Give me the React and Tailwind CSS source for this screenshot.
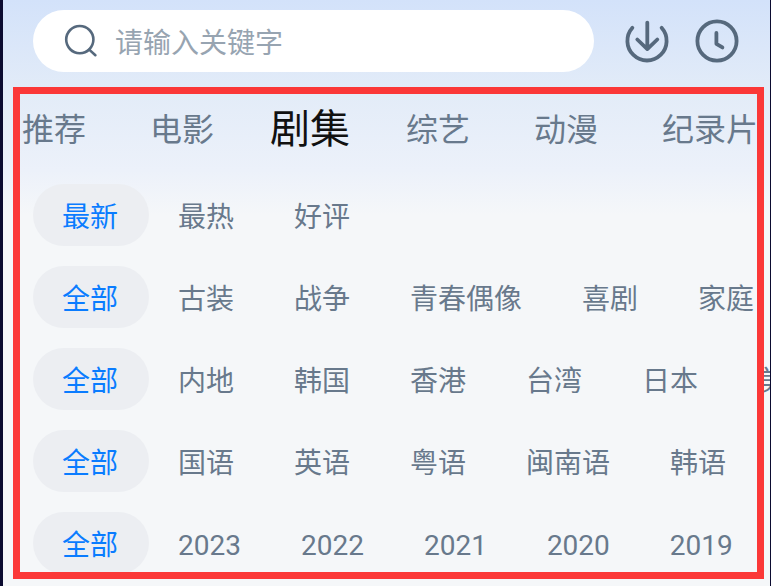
import React, { useState } from 'react';

const TABS = ['推荐', '电影', '剧集', '综艺', '动漫', '纪录片'];

const FILTERS = [
  { name: 'sort', options: ['最新', '最热', '好评'] },
  { name: 'genre', options: ['全部', '古装', '战争', '青春偶像', '喜剧', '家庭'] },
  { name: 'region', options: ['全部', '内地', '韩国', '香港', '台湾', '日本', '美国'] },
  { name: 'language', options: ['全部', '国语', '英语', '粤语', '闽南语', '韩语'] },
  { name: 'year', options: ['全部', '2023', '2022', '2021', '2020', '2019'] },
];

const SearchIcon = () => (
  <svg className="w-9 h-9 shrink-0" viewBox="0 0 36 36" fill="none" stroke="#56697d" strokeWidth="2.6">
    <circle cx="16.8" cy="16.6" r="13.6" />
    <path d="M26.2 26.6l6.2 5.6" strokeLinecap="round" />
  </svg>
);

const DownloadIcon = () => (
  <svg className="w-11 h-11" viewBox="0 0 44 44" fill="none" stroke="#56697d" strokeWidth="3.8" strokeLinecap="round" strokeLinejoin="round">
    <path d="M7.4 8.8A19.6 19.6 0 1 0 36.6 8.8" />
    <path d="M22.3 3.6v26.5M12.3 20.5l10 9.6 10-9.6" />
  </svg>
);

const HistoryIcon = () => (
  <svg className="w-11 h-11" viewBox="0 0 44 44" fill="none" stroke="#56697d" strokeWidth="3.8" strokeLinecap="round" strokeLinejoin="round">
    <circle cx="22" cy="22" r="19.6" />
    <path d="M21.4 14v10.8l6 3.6" />
  </svg>
);

const FilterRow = ({ name, options }) => {
  const [selected, setSelected] = useState(options[0]);

  return (
    <div role="group" aria-label={name} className="flex overflow-hidden pl-[30px]">
      {options.map((option) => (
        <button
          key={option}
          type="button"
          aria-pressed={option === selected}
          onClick={() => setSelected(option)}
          className={`h-[62px] shrink-0 rounded-full pt-1.5 pl-[29px] pr-[31px] text-[28px] leading-[56px] whitespace-nowrap ${
            option === selected ? 'bg-[#eceef2] text-[#0a7cff]' : 'text-[#68798c]'
          }`}
        >
          {option}
        </button>
      ))}
    </div>
  );
};

const App = () => {
  const [activeTab, setActiveTab] = useState('剧集');
  const [keyword, setKeyword] = useState('');

  return (
    <div className="overflow-hidden border-l-3 border-r border-[#0b0b30] bg-[#f5f7f9] font-[Roboto,'Noto_Sans_CJK_SC',sans-serif]">
      <div className="bg-[linear-gradient(to_bottom,#d3e2fa_0px,#e3ecf8_95px,#ecf1fa_170px,#f5f7f9_215px)]">
        <header className="flex items-center pt-[10px] pb-[15px] pl-[30px] pr-[31px]">
          <label className="flex h-[62px] min-w-0 flex-1 items-center gap-4 rounded-full bg-white pl-[30px]">
            <SearchIcon />
            <input
              type="text"
              aria-label="搜索"
              placeholder="请输入关键字"
              value={keyword}
              onChange={(e) => setKeyword(e.target.value)}
              className="h-full min-w-0 flex-1 bg-transparent pt-1 text-[28px] text-[#56697d] outline-none placeholder:text-[#97a4b1]"
            />
          </label>
          <div className="ml-[31px] flex gap-[26px]">
            <button type="button" aria-label="下载"><DownloadIcon /></button>
            <button type="button" aria-label="历史"><HistoryIcon /></button>
          </div>
        </header>

        <section className="relative pb-3">
          <nav className="flex h-[97px] gap-16 overflow-hidden pl-[19px] pr-[13px]">
            {TABS.map((tab) => (
              <button
                key={tab}
                type="button"
                onClick={() => setActiveTab(tab)}
                className={`h-[86px] shrink-0 whitespace-nowrap ${
                  tab === activeTab ? '-mx-2 text-[40px] text-[#111111]' : 'text-[32px] text-[#68798c]'
                }`}
              >
                {tab}
              </button>
            ))}
          </nav>

          <div className="flex flex-col gap-5">
            {FILTERS.map((filter) => (
              <FilterRow key={filter.name} {...filter} />
            ))}
          </div>

          {/* highlight frame around the tabs and filters */}
          <div className="pointer-events-none absolute top-0 right-[6px] bottom-[7px] left-[10px] border-7 border-[#fb3838]" />
        </section>
      </div>
    </div>
  );
};

export default App;
